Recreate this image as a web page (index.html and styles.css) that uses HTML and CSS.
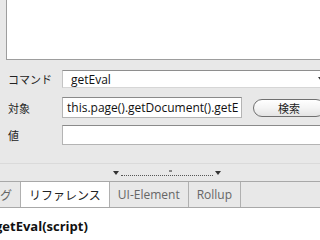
FILE: index.html
```html
<!DOCTYPE html>
<html lang="ja">
<head>
  <meta charset="UTF-8" />
  <title>Selenium IDE</title>
  <link rel="stylesheet" href="styles.css">
</head>
<body>
  <div class="window">
    <div class="log-panel"></div>
    <div class="form">
      <div class="row row-cmd">
        <label class="label">コマンド</label>
        <div class="combo"><span>getEval</span><span class="combo-arrow"></span></div>
      </div>
      <div class="row row-target">
        <label class="label">対象</label>
        <div class="target-wrap">
          <div class="field">this.page().getDocument().getE</div>
          <button class="btn">検索</button>
        </div>
      </div>
      <div class="row row-value">
        <label class="label">値</label>
        <div class="field field-value"></div>
      </div>
    </div>
    <div class="splitter">
      <div class="handle">
        <span class="tri"></span>
        <span class="dots"><span class="grip"></span></span>
        <span class="tri"></span>
      </div>
    </div>
    <div class="tabs">
      <div class="tab">ログ</div>
      <div class="tab active">リファレンス</div>
      <div class="tab">UI-Element</div>
      <div class="tab">Rollup</div>
    </div>
    <div class="content">
      <h3 class="ref-title">getEval(script)</h3>
    </div>
  </div>
</body>
</html>
```

FILE: styles.css
```css
body {
  margin: 0;
  width: 320px;
  height: 240px;
  overflow: hidden;
  background-color: #e8e8e8;
  font-family: 'Open Sans', 'Noto Sans CJK JP', sans-serif;
  color: #222;
}
.window {
  width: 326px;
}
.log-panel {
  height: 59px;
  margin-left: 6px;
  background-color: #fff;
  border-left: 1px solid #9d9d9d;
  border-bottom: 1px solid #9d9d9d;
}
.form {
  display: flex;
  flex-direction: column;
  padding: 10px 0 0 8px;
}
.row {
  display: grid;
  grid-template-columns: 54px 1fr;
  align-items: center;
}
.row-target {
  margin-top: 9px;
}
.row-value {
  margin-top: 7px;
}
.label {
  font-family: 'Noto Sans CJK JP', sans-serif;
  font-size: 11px;
  color: #222;
}
.combo {
  height: 18px;
  box-sizing: border-box;
  display: flex;
  align-items: center;
  padding-left: 8px;
  background-color: #fff;
  border-top: 1px solid #8e8e8e;
  border-left: 1px solid #c4c4c4;
  border-bottom: 1px solid #d6d6d6;
  font-size: 12px;
  color: #111;
}
.combo-arrow {
  margin-left: auto;
  margin-right: 2px;
  border-top: 4px solid #333;
  border-left: 3.5px solid transparent;
  border-right: 3.5px solid transparent;
}
.target-wrap {
  display: flex;
  align-items: center;
}
.field {
  height: 21px;
  box-sizing: border-box;
  width: 180px;
  padding: 0 4px;
  display: flex;
  align-items: center;
  background-color: #fff;
  border: 1px solid #b4b4b4;
  border-top-color: #8a8a8a;
  font-size: 12px;
  color: #111;
  white-space: nowrap;
  overflow: hidden;
}
.field-value {
  width: auto;
  height: 20px;
}
.btn {
  margin-left: 11px;
  width: 72px;
  height: 18px;
  padding: 0;
  border: 1px solid #707070;
  border-radius: 9px;
  background: linear-gradient(to bottom, #ffffff, #f4f4f4 50%, #e4e4e4);
  font-family: 'Noto Sans CJK JP', sans-serif;
  font-size: 11px;
  line-height: 16px;
  color: #222;
}
.splitter {
  height: 36px;
  box-sizing: border-box;
  padding-top: 18px;
}
.handle {
  display: flex;
  align-items: center;
  height: 17px;
  padding-left: 113px;
  border-top: 1px solid #dadada;
}
.tri {
  border-top: 4px solid #333;
  border-left: 3px solid transparent;
  border-right: 3px solid transparent;
}
.dots {
  position: relative;
  width: 92px;
  height: 3px;
  margin: 3px 2px 0;
  border-bottom: 1px dotted #555;
}
.grip {
  position: absolute;
  left: 48px;
  top: -2px;
  width: 3px;
  height: 2px;
  background-color: #888;
}
.tabs {
  display: flex;
  height: 27px;
  box-sizing: border-box;
  margin-left: -20px;
  border-top: 1px solid #a8a8a8;
  border-bottom: 1px solid #a8a8a8;
}
.tab {
  display: flex;
  align-items: center;
  padding: 0 8px;
  border-right: 1px solid #b0b0b0;
  font-size: 12px;
  color: #666;
}
.tab.active {
  background-color: #fff;
  color: #222;
}
.content {
  height: 23px;
  background-color: #fff;
  padding-top: 9px;
}
.ref-title {
  margin: 0 0 0 -5px;
  font-size: 13px;
  line-height: 18px;
  font-weight: 700;
  color: #111;
}
```
